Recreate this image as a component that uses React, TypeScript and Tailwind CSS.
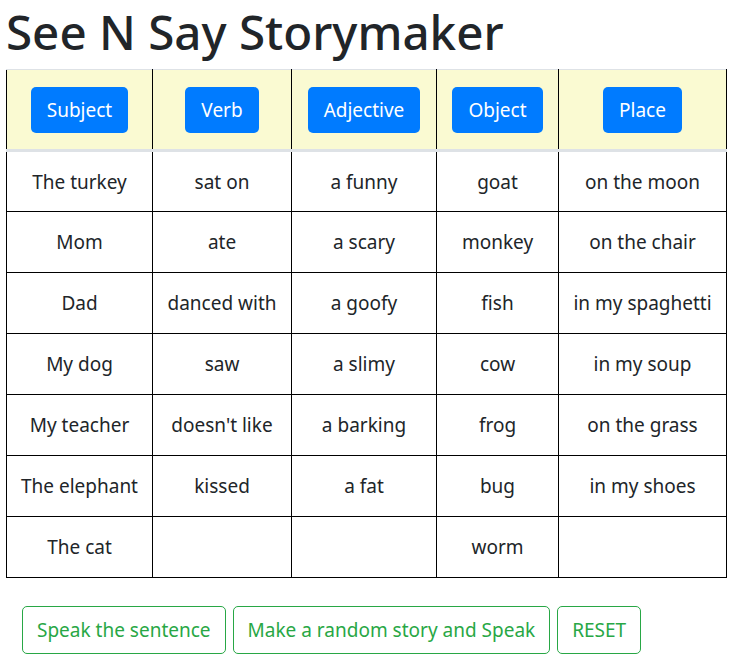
const columns = ["Subject", "Verb", "Adjective", "Object", "Place"];

const rows: string[][] = [
  ["The turkey", "sat on", "a funny", "goat", "on the moon"],
  ["Mom", "ate", "a scary", "monkey", "on the chair"],
  ["Dad", "danced with", "a goofy", "fish", "in my spaghetti"],
  ["My dog", "saw", "a slimy", "cow", "in my soup"],
  ["My teacher", "doesn't like", "a barking", "frog", "on the grass"],
  ["The elephant", "kissed", "a fat", "bug", "in my shoes"],
  ["The cat", "", "", "worm", ""],
];

const widths = ["w-[146px]", "w-[139px]", "w-[145px]", "w-[122px]", "w-[168px]"];

const actions = ["Speak the sentence", "Make a random story and Speak", "RESET"];

export default function App() {
  return (
    <div className="min-h-[666px] bg-white px-[6px] text-[#212529] font-['Noto_Sans','Open_Sans',sans-serif]">
      <h1 className="text-[47.5px] font-medium leading-[60px] pt-[2px] mb-[7px] whitespace-nowrap">
        See N Say Storymaker
      </h1>

      <table className="border-collapse table-fixed w-[720px] text-[19px] leading-[30px]">
        <thead>
          <tr className="bg-[#fafad2]">
            {columns.map((col, i) => (
              <th
                key={col}
                className={`${widths[i]} h-[81px] border-x border-x-black border-t border-t-[#dee2e6] border-b-[3px] border-b-[#dee2e6] text-center align-middle font-normal`}
              >
                <button className="rounded-[5px] bg-[#007bff] px-[16px] py-[8px] text-white leading-[30px]">
                  {col}
                </button>
              </th>
            ))}
          </tr>
        </thead>
        <tbody>
          {rows.map((row, r) => (
            <tr key={r}>
              {row.map((cell, c) => (
                <td
                  key={c}
                  className="h-[61px] border border-black text-center align-middle whitespace-nowrap"
                >
                  {cell}
                </td>
              ))}
            </tr>
          ))}
        </tbody>
      </table>

      <div className="flex gap-[7px] pt-[28px] pl-[16px]">
        {actions.map((label) => (
          <button
            key={label}
            className="rounded-[5px] border border-[#28a745] px-[14px] py-[8px] text-[19px] leading-[30px] text-[#28a745]"
          >
            {label}
          </button>
        ))}
      </div>
    </div>
  );
}
